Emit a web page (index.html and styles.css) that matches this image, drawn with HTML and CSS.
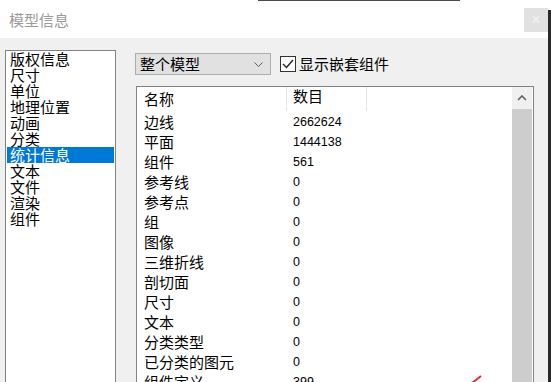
FILE: index.html
```html
<!DOCTYPE html>
<html lang="zh-CN">
<head>
    <meta charset="UTF-8">
    <meta name="viewport" content="width=device-width, initial-scale=1.0">
    <title>模型信息</title>
    <link rel="stylesheet" href="styles.css">
</head>
<body>

<div id="window">
    <div class="topline"></div>
    <div class="titlebar">
        <span class="title">模型信息</span>
        <span class="close">×</span>
    </div>

    <div class="content">
        <ul class="sidebar">
            <li>版权信息</li>
            <li>尺寸</li>
            <li>单位</li>
            <li>地理位置</li>
            <li>动画</li>
            <li>分类</li>
            <li class="selected">统计信息</li>
            <li>文本</li>
            <li>文件</li>
            <li>渲染</li>
            <li>组件</li>
        </ul>

        <div class="main">
            <div class="toolbar">
                <div class="dropdown">
                    <span>整个模型</span>
                    <svg class="chevron" width="9" height="5" viewBox="0 0 9 5">
                        <polyline points="0.5,0.5 4.5,4.5 8.5,0.5" fill="none" stroke="#606060" stroke-width="1"/>
                    </svg>
                </div>
                <span class="checkbox">
                    <svg width="14" height="14" viewBox="0 0 14 14">
                        <polyline points="2,7 5.5,10.5 12,3" fill="none" stroke="#222" stroke-width="1.4"/>
                    </svg>
                </span>
                <span class="label">显示嵌套组件</span>
            </div>

            <div class="panel">
                <div class="table">
                    <div class="row head">
                        <span class="name">名称</span>
                        <span class="count">数目</span>
                    </div>
                    <div class="row"><span class="name">边线</span><span class="num">2662624</span></div>
                    <div class="row"><span class="name">平面</span><span class="num">1444138</span></div>
                    <div class="row"><span class="name">组件</span><span class="num">561</span></div>
                    <div class="row"><span class="name">参考线</span><span class="num">0</span></div>
                    <div class="row"><span class="name">参考点</span><span class="num">0</span></div>
                    <div class="row"><span class="name">组</span><span class="num">0</span></div>
                    <div class="row"><span class="name">图像</span><span class="num">0</span></div>
                    <div class="row"><span class="name">三维折线</span><span class="num">0</span></div>
                    <div class="row"><span class="name">剖切面</span><span class="num">0</span></div>
                    <div class="row"><span class="name">尺寸</span><span class="num">0</span></div>
                    <div class="row"><span class="name">文本</span><span class="num">0</span></div>
                    <div class="row"><span class="name">分类类型</span><span class="num">0</span></div>
                    <div class="row"><span class="name">已分类的图元</span><span class="num">0</span></div>
                    <div class="row"><span class="name">组件定义</span><span class="num">399</span></div>
                </div>
                <div class="scrollbar">
                    <div class="arrow">
                        <svg width="10" height="6" viewBox="0 0 10 6">
                            <polyline points="1,5 5,1 9,5" fill="none" stroke="#606060" stroke-width="1.6"/>
                        </svg>
                    </div>
                    <div class="thumb"></div>
                </div>
            </div>
        </div>
    </div>
</div>

<div class="edge"></div>

<svg class="mark" width="12" height="10" viewBox="0 0 12 10">
    <line x1="1" y1="9" x2="10" y2="2" stroke="#d9302c" stroke-width="2"/>
</svg>

</body>
</html>
```

FILE: styles.css
```css
body {
    margin: 0;
    padding: 0;
    width: 551px;
    height: 382px;
    overflow: hidden;
    display: flex;
    background-color: #ffffff;
    font-family: "Noto Sans CJK SC", "Liberation Sans", sans-serif;
    font-size: 15px;
    color: #000000;
}

#window {
    width: 548px;
    height: 382px;
    display: flex;
    flex-direction: column;
}

.edge {
    width: 3px;
    margin-top: 10px;
    background-color: #2a2a2a;
}

.topline {
    height: 1px;
    width: 202px;
    margin-left: 258px;
    background-color: #4a4a4a;
}

.titlebar {
    height: 37px;
    display: flex;
    align-items: center;
    justify-content: space-between;
    background-color: #ffffff;
}

.title {
    padding-left: 9px;
    color: #9a9a9a;
    line-height: 18px;
}

.close {
    width: 24px;
    height: 24px;
    background-color: #e1e1e1;
    color: #f4f4f4;
    font-family: "Liberation Sans", sans-serif;
    font-size: 16px;
    line-height: 24px;
    text-align: center;
}

/* dialog body */
.content {
    flex: 1;
    display: flex;
    background-color: #f0f0f0;
    padding: 12px 0 0 5px;
    min-height: 0;
}

.sidebar {
    list-style: none;
    margin: 0;
    padding: 0 1px;
    width: 107px;
    border: 1px solid #828282;
    border-bottom: none;
    background-color: #ffffff;
}

.sidebar li {
    height: 16px;
    line-height: 16px;
    padding-left: 3px;
    white-space: nowrap;
}

.sidebar li.selected {
    background-color: #0078d7;
    color: #ffffff;
}

.main {
    margin-left: 19px;
    width: 399px;
    display: flex;
    flex-direction: column;
}

.toolbar {
    margin-top: 3px;
    height: 22px;
    display: flex;
    align-items: center;
}

.dropdown {
    width: 134px;
    height: 20px;
    border: 1px solid #adadad;
    background-color: #e1e1e1;
    display: flex;
    align-items: center;
    justify-content: space-between;
}

.dropdown span {
    padding-left: 4px;
    line-height: 20px;
}

.chevron {
    margin-right: 7px;
}

.checkbox {
    width: 14px;
    height: 14px;
    margin-left: 9px;
    border: 1px solid #333333;
    background-color: #ffffff;
    display: flex;
}

.label {
    margin-left: 3px;
    line-height: 18px;
}

.panel {
    margin-top: 11px;
    margin-left: 1px;
    flex: 1;
    display: flex;
    border: 1px solid #828282;
    border-bottom: none;
    background-color: #ffffff;
}

.table {
    flex: 1;
}

.row {
    height: 20px;
    display: flex;
    align-items: center;
}

.row.head {
    height: 25px;
    align-items: flex-start;
}

.row span {
    white-space: nowrap;
    line-height: 18px;
}

.name {
    width: 143px;
    padding-left: 7px;
}

.row.head .name {
    border-right: 1px solid #e5e5e5;
    width: 142px;
    height: 24px;
    line-height: 24px;
}

.count {
    width: 73px;
    padding-left: 6px;
    height: 24px;
    line-height: 24px;
    border-right: 1px solid #e5e5e5;
}

.num {
    padding-left: 6px;
    font-family: "Liberation Sans", sans-serif;
    font-size: 12.5px;
}

.scrollbar {
    width: 20px;
    display: flex;
    flex-direction: column;
    background-color: #f0f0f0;
    margin-right: 1px;
}

.arrow {
    height: 22px;
    display: flex;
    align-items: center;
    justify-content: center;
}

.thumb {
    flex: 1;
    background-color: #cdcdcd;
}

.mark {
    position: absolute;
    left: 471px;
    top: 374px;
}
```
